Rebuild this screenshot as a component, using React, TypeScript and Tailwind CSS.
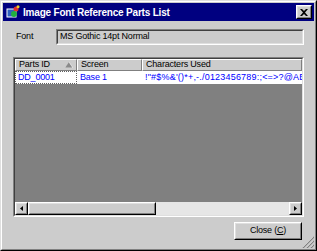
const CHARS = "!\"#$%&'()*+,-./0123456789:;<=>?@ABCDEFGHIJKLMNOPQRSTUVWXYZ";

function TitleIcon() {
  return (
    <svg width="14" height="14" viewBox="0 0 14 14">
      <rect x="1" y="4" width="9" height="8" fill="#3060c0" stroke="#ffffff" strokeWidth="1" />
      <circle cx="10" cy="4" r="2.5" fill="#e03030" />
      <circle cx="8" cy="9" r="3" fill="#20b040" />
      <circle cx="12" cy="1.8" r="1.5" fill="#f0d020" />
    </svg>
  );
}

function Raised({ className = "", children }: { className?: string; children?: React.ReactNode }) {
  return (
    <div className={`bg-[#cccccc] border border-t-white border-l-white border-r-black border-b-black ${className}`}>
      <div className="w-full h-full border border-t-[#dfdfdf] border-l-[#dfdfdf] border-r-[#808080] border-b-[#808080] flex items-center justify-center">
        {children}
      </div>
    </div>
  );
}

export default function App() {
  return (
    <div className="w-[317px] h-[251px] bg-[#cccccc] border border-t-[#dfdfdf] border-l-[#dfdfdf] border-r-black border-b-black font-['Liberation_Sans',Arial,sans-serif] text-[9px] tracking-[-0.2px] text-black">
      <div className="h-full border border-t-white border-l-white border-r-[#808080] border-b-[#808080] p-px flex flex-col">
        {/* title bar */}
        <div className="h-[18px] bg-[#000080] flex items-center pl-[3px] pr-[2px] gap-[3px]">
          <TitleIcon />
          <span className="text-white font-bold text-[10px] tracking-[-0.2px]">Image Font Reference Parts List</span>
          <Raised className="ml-auto w-[16px] h-[14px]">
            <svg width="8" height="7" viewBox="0 0 8 7">
              <path d="M0 0 L2 0 L4 2 L6 0 L8 0 L5 3.5 L8 7 L6 7 L4 5 L2 7 L0 7 L3 3.5 Z" fill="black" />
            </svg>
          </Raised>
        </div>

        <div className="flex-1 flex flex-col px-[10px] pt-[8px] relative">
          {/* font row */}
          <div className="flex items-center h-[16px]">
            <span className="w-[43px] pl-[3px]">Font</span>
            <div className="flex-1 h-full border border-t-[#808080] border-l-[#808080] border-r-white border-b-white">
              <div className="h-full border border-t-[#404040] border-l-[#404040] border-r-[#dfdfdf] border-b-[#dfdfdf] flex items-center pl-[2px]">
                MS Gothic 14pt Normal
              </div>
            </div>
          </div>

          {/* list view */}
          <div className="mt-[12px] h-[160px] border border-t-[#808080] border-l-[#808080] border-r-white border-b-white">
            <div className="h-full border border-t-[#404040] border-l-[#404040] border-r-[#dfdfdf] border-b-[#dfdfdf] flex flex-col overflow-hidden">
              <div className="flex h-[12px] shrink-0">
                <div className="w-[62px] border-r border-b border-r-[#808080] border-b-[#808080] border-t border-l border-t-white border-l-white flex items-center pl-[3px] relative">
                  Parts ID
                  <svg className="absolute right-[3px] top-[2px]" width="8" height="6" viewBox="0 0 8 6">
                    <path d="M4 0 L8 6 L0 6 Z" fill="#8a8a8a" />
                    <path d="M4 0 L8 6 L0 6" stroke="#ffffff" strokeWidth="0.6" fill="none" />
                  </svg>
                </div>
                <div className="w-[65px] border-r border-b border-r-[#808080] border-b-[#808080] border-t border-l border-t-white border-l-white flex items-center pl-[3px]">
                  Screen
                </div>
                <div className="flex-1 border-r border-b border-r-[#808080] border-b-[#808080] border-t border-l border-t-white border-l-white flex items-center pl-[3px]">
                  Characters Used
                </div>
              </div>
              <div className="flex h-[13px] bg-white text-[#0000ff] shrink-0 whitespace-nowrap">
                <div className="w-[62px] border border-dotted border-[#606060] flex items-center pl-[2px]">DD_0001</div>
                <div className="w-[65px] flex items-center pl-[3px]">Base 1</div>
                <div className="flex-1 flex items-center pl-[3px] overflow-hidden tracking-[0.2px]">{CHARS}</div>
              </div>
              <div className="flex-1 bg-[#808080]" />
              {/* horizontal scrollbar */}
              <div className="flex h-[13px] shrink-0 bg-[#e6e6e6]">
                <Raised className="w-[13px] h-full">
                  <svg width="3" height="5" viewBox="0 0 3 5"><path d="M3 0 L0 2.5 L3 5 Z" fill="black" /></svg>
                </Raised>
                <Raised className="w-[128px] h-full" />
                <div className="flex-1" />
                <Raised className="w-[13px] h-full">
                  <svg width="3" height="5" viewBox="0 0 3 5"><path d="M0 0 L3 2.5 L0 5 Z" fill="black" /></svg>
                </Raised>
              </div>
            </div>
          </div>

          {/* buttons */}
          <div className="mt-[5px] flex justify-end pr-[2px]">
            <Raised className="w-[68px] h-[18px]">
              <span>
                Close (<span className="underline">C</span>)
              </span>
            </Raised>
          </div>

          {/* resize grip */}
          <svg className="absolute right-0 bottom-0" width="12" height="12" viewBox="0 0 12 12">
            <path d="M11 1 L1 11 M11 5 L5 11 M11 9 L9 11" stroke="#ffffff" />
            <path d="M12 1 L1 12 M12 5 L5 12 M12 9 L9 12" stroke="#808080" strokeWidth="1.2" />
          </svg>
        </div>
      </div>
    </div>
  );
}
